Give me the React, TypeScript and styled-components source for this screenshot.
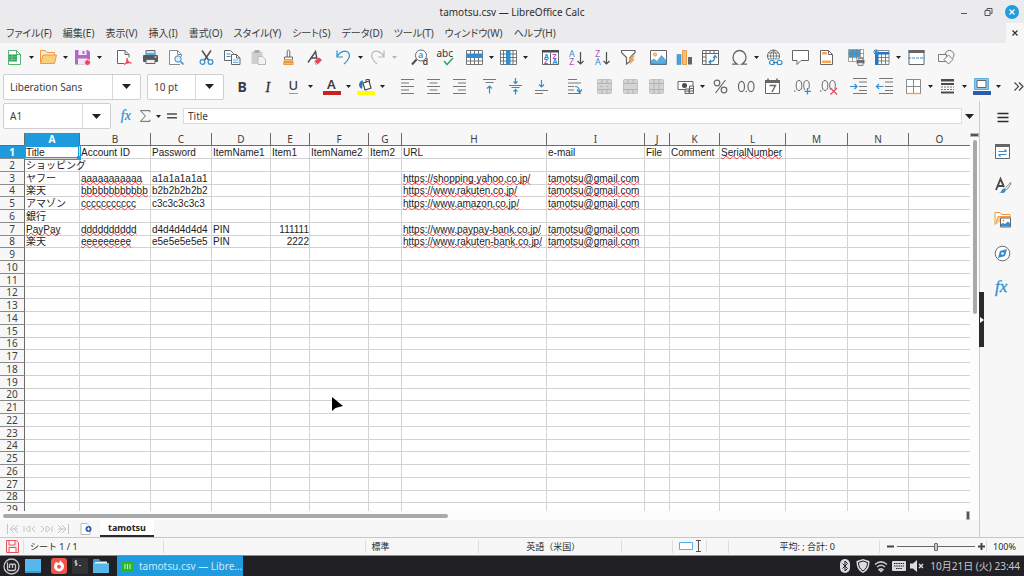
import React from 'react';
import styled, { createGlobalStyle } from 'styled-components';

const Global = createGlobalStyle`
  * { box-sizing: border-box; }
  body { margin: 0; background: #f7f7f7; }
  button, input { font: inherit; color: inherit; margin: 0; padding: 0; border: 0; background: none; }
  svg { display: block; flex: none; }
`;

const Screen = styled.div`
  height: 100vh;
  display: flex;
  flex-direction: column;
  overflow: hidden;
  background: #f7f7f7;
  color: #3d3d3d;
  font: 10px/14px 'Noto Sans', 'Noto Sans CJK JP', sans-serif;
`;
const TitleBar = styled.header`
  height: 23px;
  flex: none;
  display: grid;
  grid-template-columns: 1fr auto 1fr;
  align-items: center;
  background: #ebebed;
`;
const Title = styled.h1`
  grid-column: 2;
  margin: 0;
  font-size: 10px;
  font-weight: 400;
  color: #2e2e2e;
`;
const WindowButtons = styled.div`
  display: flex;
  justify-content: flex-end;
  gap: 10px;
  padding-right: 5px;
`;
const MenuBar = styled.nav`
  height: 20px;
  flex: none;
  display: flex;
  align-items: center;
  gap: 11px;
  padding-left: 6px;
  background: #ebebed;
`;
const MenuItem = styled.button`
  white-space: nowrap;
  font-feature-settings: 'palt';
`;
const CloseDoc = styled.button`
  margin-left: auto;
  width: 18px;
  height: 20px;
  display: grid;
  place-items: center;
  background: #f7f7f7;
`;
const Toolbar = styled.div`
  height: 29px;
  flex: none;
  display: flex;
  align-items: center;
  gap: 4px;
  padding-left: 2px;
`;
const Group = styled.div<{ $wide?: boolean }>`
  display: flex;
  flex: none;
  align-items: center;
  margin-left: ${(p) => (p.$wide ? 3 : 0)}px;
`;
const Tool = styled.button<{ $w?: number }>`
  width: ${(p) => p.$w ?? 26}px;
  height: 24px;
  flex: none;
  display: grid;
  place-items: center;
`;
const Combo = styled.div<{ $w: number }>`
  width: ${(p) => p.$w}px;
  height: 26px;
  flex: none;
  display: flex;
  border: 1px solid #cfcfd3;
  border-radius: 2px;
  background: #fff;
  input { flex: 1; min-width: 0; padding-left: 6px; outline: 0; }
  button { width: 28px; display: grid; place-items: center; border-left: 1px solid #d8d8dc; }
`;
const ComboRow = styled.div`
  display: flex;
  gap: 6px;
  padding: 0 1px;
`;
const More = styled.button`
  margin-left: auto;
`;
const Workspace = styled.div`
  flex: 1;
  min-height: 0;
  display: flex;
`;
const Main = styled.main`
  flex: 1;
  min-width: 0;
  display: flex;
  flex-direction: column;
`;
const FormulaBar = styled.div`
  height: 30px;
  flex: none;
  display: flex;
  align-items: center;
  padding: 0 3px;
  margin-bottom: 2px;
`;
const FormulaTools = styled.div`
  display: flex;
  align-items: center;
  padding-left: 7px;
`;
const FormulaInput = styled.input`
  flex: 1;
  min-width: 0;
  height: 16px;
  margin: 0 1px 0 2px;
  padding-left: 4px;
  border: 1px solid #dcdcdc;
  background: #fff;
  outline: 0;
`;
const SheetArea = styled.div`
  flex: 1;
  min-height: 0;
  display: flex;
`;
const GridView = styled.div`
  flex: 1;
  min-width: 0;
  overflow: hidden;
  background: #fff;
`;
const Grid = styled.table`
  width: 100%;
  table-layout: fixed;
  border-collapse: separate;
  border-spacing: 0;
  line-height: 11px;
  th { padding: 0; font-weight: 400; background: #f7f7f7; }
`;
const ColHead = styled.th<{ $on?: boolean }>`
  height: 13px;
  border-right: 1px solid #6b6b6b;
  border-bottom: 1px solid #6b6b6b;
  &&& {
    background: ${(p) => (p.$on ? '#1e9bdd' : '#f7f7f7')};
    color: ${(p) => (p.$on ? '#fff' : '#3d3d3d')};
    font-weight: ${(p) => (p.$on ? 700 : 400)};
  }
  &:last-child { border-right: 0; }
`;
const Corner = styled.td`
  height: 13px;
  padding: 0;
  background: #f7f7f7;
  border-right: 1px solid #6b6b6b;
  border-bottom: 1px solid #6b6b6b;
`;
const RowHead = styled(ColHead)`
  height: auto;
  border-bottom-color: #8a8a8a;
`;
const Row = styled.tr`
  height: 13px;
  &:nth-child(4n) { height: 12px; }
`;
const Cell = styled.td<{ $on?: boolean; $right?: boolean }>`
  position: relative;
  padding: 0 0 0 1px;
  border-right: 1px solid #d2d2d2;
  border-bottom: 1px solid #d2d2d2;
  color: #1c1c1c;
  font-family: 'Liberation Sans', 'Noto Sans CJK JP', sans-serif;
  white-space: nowrap;
  text-align: ${(p) => (p.$right ? 'right' : 'left')};
  ${(p) => p.$on && 'box-shadow: 0 0 0 1px #1e9bdd, inset 0 0 0 1px #1e9bdd; z-index: 1;'}
  &:last-child { border-right: 0; }
`;
const Text = styled.div`
  height: 11px;
`;
const Misspelt = styled.span`
  text-decoration: underline wavy #f5383d 1px;
  text-decoration-skip-ink: none;
  text-underline-offset: -1px;
`;
const FillHandle = styled.i`
  position: absolute;
  right: -2px;
  bottom: -2px;
  width: 4px;
  height: 4px;
  background: #1e9bdd;
`;
const VScroll = styled.div`
  width: 9px;
  flex: none;
  display: flex;
  flex-direction: column;
  align-items: center;
  gap: 3px;
  background: #fcfcfc;
`;
const SplitGrip = styled.div<{ $vertical?: boolean }>`
  width: ${(p) => (p.$vertical ? 4 : 9)}px;
  height: ${(p) => (p.$vertical ? 9 : 4)}px;
  background: #555;
  border: 1px solid #b5b5b5;
`;
const VThumb = styled.div`
  width: 4px;
  height: 46%;
  border-radius: 2px;
  background: #a9a9a9;
`;
const HScroll = styled.div`
  height: 9px;
  flex: none;
  display: flex;
  align-items: center;
  justify-content: space-between;
  padding: 0 9px 0 3px;
  background: #fcfcfc;
`;
const HThumb = styled.div`
  width: 46%;
  height: 4px;
  border-radius: 2px;
  background: #a9a9a9;
`;
const TabBar = styled.div`
  height: 17px;
  flex: none;
  display: flex;
  align-items: stretch;
  padding-left: 4px;
`;
const TabNav = styled.button`
  width: 17px;
  display: grid;
  place-items: center;
`;
const AddSheet = styled(TabNav)`
  width: 28px;
`;
const SheetTab = styled.button`
  width: 54px;
  background: #fff;
  border-bottom: 2px solid #2a2a2a;
  color: #222;
  font-size: 9px;
  font-weight: 700;
  line-height: 14px;
`;
const Sidebar = styled.aside`
  width: 45px;
  flex: none;
  position: relative;
  display: flex;
  flex-direction: column;
  align-items: center;
  gap: 10px;
  padding-top: 4px;
  border-left: 1px solid #cbcbcb;
`;
const SideHandle = styled.button`
  position: absolute;
  left: -1px;
  top: 191px;
  width: 5px;
  height: 55px;
  display: grid;
  place-items: center;
  background: #2a2a2e;
`;
const StatusBar = styled.footer`
  height: 19px;
  flex: none;
  display: grid;
  grid-template-columns: 24px 140fr 202fr 114fr 143fr 51fr 34px 22px 151fr 107px 37px;
  align-items: center;
  border-top: 1px solid #c6c6c6;
  border-bottom: 1px solid #8e8e8e;
  color: #2a2a2a;
  font-size: 9px;
`;
const Status = styled.div<{ $center?: boolean }>`
  height: 13px;
  display: flex;
  align-items: center;
  justify-content: ${(p) => (p.$center ? 'center' : 'flex-start')};
  gap: 2px;
  padding-left: 6px;
  line-height: 13px;
  white-space: nowrap;
  border-right: 1px solid #dedede;
  &:last-child { border-right: 0; }
`;
const Zoom = styled.input`
  appearance: none;
  flex: 1;
  min-width: 0;
  height: 9px;
  background: linear-gradient(#666, #666) center / 100% 1px no-repeat;
  &::-webkit-slider-thumb {
    appearance: none;
    width: 4px;
    height: 8px;
    border: 1px solid #666;
    border-radius: 1px;
    background: #ccc;
  }
`;
const Taskbar = styled.footer`
  height: 20px;
  flex: none;
  display: flex;
  align-items: center;
  padding: 0 4px 0 3px;
  background: #212025;
  color: #c9c9cc;
`;
const Launchers = styled.div`
  display: flex;
  align-items: center;
  gap: 5px;
  button:nth-child(3) { margin-left: 5px; }
`;
const TaskButton = styled.button`
  width: 126px;
  height: 20px;
  margin-left: 8px;
  padding: 0 0 0 5px;
  display: flex;
  align-items: center;
  gap: 6px;
  background: #1f9bde;
  color: #cfeafa;
  span { overflow: hidden; text-overflow: ellipsis; white-space: nowrap; }
`;
const Tray = styled.div`
  margin-left: auto;
  display: flex;
  align-items: center;
  gap: 4px;
  time { margin-left: 2px; white-space: nowrap; font-feature-settings: 'palt'; }
`;
const Pointer = styled.svg`
  position: absolute;
  left: 331px;
  top: 396px;
  z-index: 2;
`;

const G = '#666668';
const B = '#2f8fd0';
const O = '#ee9a4b';
const P = '#b04fc0';
const L = '#b9b9bb';

type Draw = React.ReactNode;
const lines = (d: string, c = G, w = 1): Draw => <path d={d} stroke={c} strokeWidth={w} fill="none" />;
const letter = (x: number, y: number, s: string, c: string, size = 8, w = 400): Draw => (
  <text x={x} y={y} fill={c} fontSize={size} fontWeight={w} fontFamily="'Noto Sans', sans-serif">{s}</text>
);
const mergeBase: Draw = <rect x="1.5" y="1.5" width="14" height="14" rx="1" fill="#d4d4d4" stroke="#c2c2c4" />;

const icons: Record<string, Draw> = {
  new: <><path d="M2.500 1.500h8l4 4v10h-12z" fill="#fff" stroke="#55b374" /><path d="M10.500 1.500v4h4" fill="none" stroke="#55b374" /><path d="M3 5.500h8v7H3z" fill="#2fa35a" /><path d="M3 8h8M3 10.500h8M6 5.500v7" stroke="#8fd0a6" strokeWidth=".7" /></>,
  open: <><path d="M.5 14.500v-13h5l1.500 2h7.500v3" fill="#fbe8cf" stroke={O} /><path d="M.5 14.500l2.500-8.500h13.500l-2 8.500z" fill="#f8cf7a" stroke={O} /></>,
  save: <><path d="M1 1h13l2 2v12.500H1z" fill="#b668c8" /><path d="M4.500 1v5h8V1z" fill="#f6ecf8" /><path d="M4 15.500v-6h9v6z" fill="#f3e6f6" /><path d="M9.500 2v3" stroke="#b668c8" strokeWidth="2" /><circle cx="13.500" cy="13.500" r="3" fill="#e8485a" stroke="#f7f7f7" /></>,
  pdf: <><path d="M8 14.500H1.500v-13h7.500l4 4v3" fill="#fff" stroke={G} /><path d="M9 1.500v4h4" fill="none" stroke={G} /><path d="M8 15.500c2-1 3-3.500 3-6.500.500 3 2 4.500 4.500 5-3-.5-5 .5-7.500 1.500z" fill="#e8485a" stroke="#e8485a" strokeWidth=".8" /></>,
  print: <><path d="M4 1.500h9v5H4z" fill="#cfe6f7" stroke={G} /><path d="M4 4h9v3H4z" fill="#5aaee0" /><rect x="1" y="6" width="15" height="7" rx="1" fill="#58585a" /><path d="M4 10.500h9v4H4z" fill="#eee" stroke={G} /><path d="M12.500 8h2" stroke="#fff" /></>,
  preview: <><path d="M12 15.500H1.500v-14h8l4 4v2" fill="#fff" stroke="#8a8a8c" /><path d="M9.500 1.500v4h4" fill="none" stroke="#8a8a8c" /><circle cx="10" cy="10" r="3.200" fill="#d8edf9" stroke={B} /><path d="M12.500 12.500l3 3" stroke={B} strokeWidth="1.600" /></>,
  cut: <>{lines('M4 1.500l6.500 9.500M13 1.500L6.500 11', '#4c4c4e', 1.4)}<circle cx="4.500" cy="13" r="2.400" fill="none" stroke={B} strokeWidth="1.200" /><circle cx="12.500" cy="13" r="2.400" fill="none" stroke={B} strokeWidth="1.200" /></>,
  copy: <><path d="M.500 1.500h6l3 3v7h-9z" fill="#fff" stroke={G} /><path d="M2.500 5h4M2.500 7.500h4" stroke={B} /><path d="M7.500 5.500h5l3.500 3.500v6.500H7.500z" fill="#fff" stroke={G} /><path d="M12.500 5.500V9H16" fill="none" stroke={G} /><path d="M9 11h5.500M9 13.300h5.500" stroke="#6eb4e2" strokeWidth="1.200" /></>,
  paste: <><rect x="1.500" y="2.500" width="11" height="12.500" fill="#cfcfd0" /><rect x="4.500" y="1" width="5" height="3" fill="#a9a9ab" /><path d="M8 7.500h4.500l3 3v5H8z" fill="#f2f2f2" stroke={L} /></>,
  brush: <><path d="M7.200 8V2.500a1.300 1.300 0 012.600 0V8" fill="#fff" stroke={G} /><path d="M4.500 10.500V8h8v2.500" fill="#fff" stroke={G} /><path d="M4.500 10.500h8l.7 5H3.500z" fill="#f7bd6a" stroke={O} /><path d="M4 13h9" stroke="#d9782a" /></>,
  clear: <>{lines('M2 13.500L9.500 2.500 11 10M5 9h6', '#4c4c4e', 1.4)}<path d="M8 12.500l5-4 3 2.500-4.500 4.500h-2z" fill="#e8485a" /><path d="M8 12.500l3.500 3" stroke="#f7f7f7" /></>,
  undo: lines('M2 1.500v6.500h6M2 8C5 1.500 12 .500 14 4.500c1.500 3.500-1 7-5 10.500', B, 1.2),
  redo: lines('M15 1.500v6.500H9M15 8C12 1.500 5 .500 3 4.500c-1.500 3.500 1 7 5 10.500', L, 1.2),
  find: <><circle cx="10" cy="6.500" r="5.500" fill="#fff" stroke={G} /><path d="M5.500 10.500L1 15.500" stroke="#4c4c4e" strokeWidth="2" />{letter(7, 9, 'a', B, 9, 600)}{letter(11.500, 16, 'd', '#4c4c4e', 9, 600)}</>,
  spell: <>{letter(-0.500, 7.500, 'abc', '#333', 10)}{lines('M7 12l3 3.500L16 9', '#35a863', 1.5)}</>,
  rows: <><path d="M.500 1.500h16v14H.500z" fill="#fff" />{lines('M.5 1.500h16v14H.5zM.5 12h16M4.500 1.500v14M8.500 1.500v14M12.500 1.500v14', G, 0.9)}<path d="M.500 4.500h16v4.500H.500z" fill="#2f8fd0" /></>,
  cols: <><path d="M.500 1.500h16v14H.500z" fill="#fff" />{lines('M.5 1.500h16v14H.5zM.5 5h16M.5 8.500h16M.5 12h16M3.500 1.500v14M13 1.500v14', G, 0.9)}<path d="M6 1.500h4.500v14H6z" fill="#2f8fd0" /></>,
  sort: <><path d="M.500 1.500h16v14H.500z" fill="#fff" stroke={G} /><path d="M0 1h17v2.500H0z" fill="#4c4c4e" />{lines('M8.500 2v14')}{letter(2, 9.500, 'A', B, 7, 700)}{letter(2, 15, 'Z', P, 7, 700)}{letter(10.500, 9.500, 'Z', P, 7, 700)}{letter(10.500, 15, 'A', B, 7, 700)}</>,
  az: <>{letter(1, 7.500, 'A', B, 9)}{letter(1, 16, 'Z', P, 9)}{lines('M12.500 3v12M9.500 12l3 3 3-3', '#4c4c4e', 1.2)}</>,
  za: <>{letter(1, 7.500, 'Z', P, 9)}{letter(1, 16, 'A', B, 9)}{lines('M12.500 3v12M9.500 12l3 3 3-3', '#4c4c4e', 1.2)}</>,
  filter: <><path d="M1.500 1.500h13.500v2l-5 5v4l-3.500 2.500V8.500l-5-5z" fill="#fff" stroke={G} strokeWidth="1.200" /><path d="M12 6.500L8.500 11.500h3L9.500 16l5.500-6h-2.500L15 6.500z" fill="#f5a04d" /></>,
  image: <><path d="M.500 1.500h16v14H.500z" fill="#fff" stroke={G} /><circle cx="5" cy="5.500" r="1.600" fill="#f8cf7a" stroke={O} /><path d="M1 15v-3l3-2 3 2.500 4.500-6 4.500 5V15z" fill="#5aaee0" stroke={B} strokeWidth=".6" /></>,
  chart: <><path d="M1 5.500h4v10H1z" fill="#4fa3dc" stroke={B} strokeWidth=".6" /><path d="M6.500 1.500h4v14h-4z" fill="#f7c073" stroke={O} /><path d="M12 8h4v7.500h-4z" fill={G} /></>,
  pivot: <><path d="M.500 1.500h16v14H.500z" fill="#fff" stroke={G} />{lines('M.5 4.500h16M4 1.500v14M8 1.500v3M12 1.500v3M.5 8H4M.5 12H4')}{lines('M7 13c4 0 6-2 6-6M11 9l2-2.500L15 9M9 11l-2 2 2 2', B, 1.2)}</>,
  omega: lines('M1 15.200H6.300c-3-2-4.300-4-4.300-6.700C2 4.500 5 1.500 8.500 1.500S15 4.500 15 8.500c0 2.700-1.300 4.700-4.300 6.700H16', G, 1.3),
  link: <><circle cx="7.500" cy="7" r="6" fill="#fff" stroke={G} />{lines('M1.500 7h12M2.500 4h10M2.500 10h10M7.500 1v12M7.500 1c-4 4-4 8 0 12M7.500 1c4 4 4 8 0 12', G, 0.8)}<path d="M3 10.500h14v6H3z" fill="#f7f7f7" /><rect x="3.500" y="11.500" width="5" height="4" rx="2" fill="none" stroke={B} strokeWidth="1.200" /><rect x="11" y="11.500" width="5" height="4" rx="2" fill="none" stroke={B} strokeWidth="1.200" />{lines('M7 13.500h5', B)}</>,
  comment: <path d="M.500 1.500h16v10H9l-4 4v-4H.500z" fill="#fff" stroke={G} />,
  header: <><path d="M2.500 1.500h8l4 4v10h-12z" fill="#fff" stroke={G} /><path d="M4 3h5v2.500H4zM4 11.500h9V14H4z" fill="#f5a75c" /><path d="M10.500 1.500v4h4" fill="none" stroke={G} /></>,
  area: <><path d="M.500.500h15v12H.500z" fill="#fff" /><path d="M1 1h11v7H1z" fill="#3f9bd8" />{lines('M.5.500h15v12H.5zM.5 4.500h15M.5 8.500h15M4.500.5v12M8.500.5v12M12.500.5v12', '#7d7d80', 0.7)}<path d="M8 10.500h9v5H8z" fill="#f7f7f7" /><rect x="8.500" y="11" width="8" height="3.500" fill={G} /><path d="M10 9.500h5v2h-5zM10 13.500h5v3h-5z" fill="#cfe6f7" stroke={G} strokeWidth=".7" /></>,
  freeze: <><path d="M2.500 1.500h13.500v14H2.500z" fill="#fff" />{lines('M2.500 1.500H16v14H2.500zM5 8.500h11M5 12h11M8.500 5v11M12.500 5v11', G, 0.8)}<path d="M2 3h14v2.500H5.500V16H2z" fill="#2278c4" />{lines('M3 0v6M0 3h6M1 1l4 4M5 1L1 5', '#2f8fd0', 1)}</>,
  split: <><path d="M1 1.500h15v14H1z" fill="#fff" stroke={G} /><path d="M.500 1h16v3H.500z" fill={G} /><path d="M0 9h17" stroke={B} strokeDasharray="3 1" /></>,
  shapes: <><circle cx="11.500" cy="6" r="4.500" fill="#f7f7f7" stroke="#7a7a7c" /><path d="M.500 5.500h8v7h-8z" fill="#f7f7f7" stroke="#7a7a7c" /><path d="M10.500 6l4.500 4.500-4.500 4.500L6 10.500z" fill="#f7f7f7" stroke="#7a7a7c" /></>,
  bold: letter(3.500, 13.500, 'B', '#3d3d3d', 14, 700),
  italic: <text x="5.500" y="13.500" fontSize="14" fontStyle="italic" fontFamily="'Liberation Serif', serif" fill="#2e2e2e" stroke="#2e2e2e" strokeWidth=".3">I</text>,
  underline: <>{letter(3.500, 12, 'U', '#3d3d3d', 13, 500)}{lines('M4 15.500h9', '#58aee2')}</>,
  fontcolor: <>{letter(4, 11, 'A', '#3d3d3d', 13, 600)}<path d="M0 13h18v4H0z" fill="#c9211e" /></>,
  fill: <><path d="M2 7c0-3 2-4.500 4-4.500L5 11c-1.500-1-3-2-3-4z" fill="#2278c4" /><path d="M6 5l6-2 2 7-6 2z" fill="#fff" stroke="#4c4c4e" strokeWidth="1.200" />{lines('M9 5V1.500h3.500V5', '#4c4c4e')}<path d="M0 13h18v4H0z" fill="#ffff00" /></>,
  left: lines('M2 1.500h13M2 5h8M2 8.500h13M2 12h8M2 15.500h13', '#77777a'),
  center: lines('M2 1.500h13M4.500 5h8M2 8.500h13M4.500 12h8M2 15.500h13', '#77777a'),
  right: lines('M2 1.500h13M7 5h8M2 8.500h13M7 12h8M2 15.500h13', '#77777a'),
  top: <>{lines('M2 1.500h13M4.500 4.500h8', '#77777a')}{lines('M8.500 15.500V8M6 10.500L8.500 8l2.500 2.500', B, 1.2)}</>,
  middle: <>{lines('M2 7.500h13M4.500 9.500h8', '#77777a')}{lines('M8.500 0v5.500M6.500 3.500l2 2 2-2M8.500 16.500v-5M6.500 13.500l2-2 2 2', B, 1.2)}</>,
  bottom: <>{lines('M2 12.500h13M2 15.500h8', '#77777a')}{lines('M8.500 2v7M6 6.500L8.500 9 11 6.500', B, 1.2)}</>,
  wrap: <>{lines('M2 1.500h9M2 5h13M2 8.500h6M2 12h6M2 15.500h13', '#77777a')}{lines('M9 8.500c3 0 4.500 1.500 4.500 5M11 11.500l2.500 3 2.500-3', B, 1.2)}</>,
  merge1: <>{mergeBase}{lines('M1.5 5.500h14M1.5 11.500h14M6 1.500v4M11 1.500v4M6 11.500v4M11 11.500v4M4 8.500h3M10 8.500h3', '#b2b2b4')}</>,
  merge2: <>{mergeBase}{lines('M1.5 5.500h14M1.5 11.500h14M6 1.500v4M11 1.500v4M6 11.500v4M11 11.500v4', '#b2b2b4')}</>,
  merge3: <>{mergeBase}{lines('M1.5 5.500h14M1.5 11.500h14M6 1.500v14M11 1.500v14', '#b2b2b4')}</>,
  currency: <><path d="M1 3.500h15v8H1z" fill="#fff" stroke={G} /><circle cx="7.500" cy="7.500" r="2.500" fill="#4c4c4e" /><path d="M8 11h4v4.500H8zM12.500 8h4v7.500h-4z" fill="#eee" stroke={G} />{lines('M8 13h4M12.500 10.500h4M12.500 13h4')}</>,
  percent: <><circle cx="5" cy="5" r="2.800" fill="none" stroke={G} strokeWidth="1.200" /><circle cx="12" cy="12" r="2.800" fill="none" stroke={G} strokeWidth="1.200" />{lines('M13.500 2L3.500 15', G, 1.2)}</>,
  number: <><ellipse cx="3.500" cy="8.500" rx="3" ry="5.200" fill="none" stroke={G} strokeWidth="1.200" /><ellipse cx="13" cy="8.500" rx="3" ry="5.200" fill="none" stroke={G} strokeWidth="1.200" /><circle cx="8.300" cy="13.500" r=".8" fill={G} /></>,
  date: <><path d="M1.500 2.500h14v13h-14z" fill="#fff" stroke={G} /><path d="M1 2h15v3H1z" fill={G} />{lines('M4 .5v3M13 .5v3', G, 1.5)}{lines('M5.500 7.500h6L8 14', G, 1.4)}</>,
  decadd: <><ellipse cx="5" cy="7.500" rx="2.800" ry="5" fill="none" stroke={G} /><ellipse cx="12.500" cy="7.500" rx="2.800" ry="5" fill="none" stroke={G} /><circle cx=".8" cy="13" r=".8" fill={G} /><circle cx="13.500" cy="13.500" r="3" fill="#f7f7f7" />{lines('M13.500 10v6.500M10.500 13.300H17', B, 1.3)}</>,
  decdel: <><ellipse cx="5" cy="7.500" rx="2.800" ry="5" fill="none" stroke={G} /><ellipse cx="12.500" cy="7.500" rx="2.800" ry="5" fill="none" stroke={G} /><circle cx=".8" cy="13" r=".8" fill={G} /><circle cx="13.500" cy="13.500" r="3" fill="#f7f7f7" />{lines('M10.500 10l6.500 6.500M17 10l-6.500 6.500', '#e8485a', 1.2)}</>,
  indent: <>{lines('M3 .5h14M9 4h8M9 8.500h8M9 12.500h8M3 15.500h14', '#77777a')}{lines('M0 8.500h7M4.500 6L7 8.500 4.500 11', B, 1.2)}</>,
  outdent: <>{lines('M3 .5h14M9 4h8M9 8.500h8M9 12.500h8M3 15.500h14', '#77777a')}{lines('M7.500 8.500h-7M3 6L.5 8.500 3 11', B, 1.2)}</>,
  borders: <><path d="M1.500 1.500h14v14h-14z" fill="#fff" stroke="#8a8a8c" />{lines('M8.500 1.500v14M1.500 8.500h14', '#8a8a8c')}{lines('M1 15.500h15', O, 1.3)}</>,
  linestyle: <><path d="M2 1h13v2.500H2zM2 5h13v2H2z" fill="#4c4c4e" /><path d="M2 9h13M2 11.500h13" stroke="#77777a" strokeDasharray="2 1" />{lines('M2 14.500h13', '#4c4c4e', 2)}</>,
  bordercolor: <><path d="M1.500.500h14v11h-14z" fill="#8ec7ea" stroke="#5aaee0" /><path d="M4 2.500h9v7H4z" fill="#fff" stroke={G} /><path d="M0 13h18v4H0z" fill="#2a5caa" /></>,
  fx: <text x="1" y="13" fontSize="17" fontStyle="italic" fontFamily="'Liberation Serif', serif" fill="#2f8fd0" stroke="#2f8fd0" strokeWidth=".3">fx</text>,
  sigma: lines('M14.500 4V2H3l6 6.500L3 15h11.500v-2', G, 1.2),
  equals: lines('M2.500 6h12M2.500 10.500h12', '#4c4c4e', 1.8),
  menu: lines('M3.500 4.500h11M3.500 8.500h11M3.500 12.500h11', '#2a2a2a', 1.6),
  properties: <><path d="M1.500 1.500h14v14h-14z" fill="#fff" stroke={G} /><path d="M1 1h15v3H1z" fill={G} />{lines('M4.500 8.500h8M10.500 6.500l2 2M12.500 11.500h-8M6.500 13.500l-2-2', B, 1.2)}</>,
  styles: <>{lines('M2 13L6.500 2 10 10M4 9h5.500', '#4c4c4e', 1.9)}<path d="M16.500 5.500L11 11.500l1.500 1.500 4.500-6z" fill="#fff" stroke={G} strokeWidth=".8" /><path d="M5 15.500c3 0 2.500-4 5-4 3 0 2 4-1 4.500z" fill="#2f8fd0" /></>,
  gallery: <><path d="M1 13.500v-12h5l1.500 2H16V9" fill="#fff" stroke={O} /><path d="M1.500 13.500L4 5.500h13" fill="#f8cf7a" stroke={O} /><path d="M6.500 7h10v9h-10z" fill="#fff" stroke={G} /><circle cx="9.500" cy="9.500" r="1" fill={O} /><path d="M7 15.500V13l2-1 2 1 3-2.500 2 2v3z" fill="#2f8fd0" /></>,
  navigator: <><circle cx="8.500" cy="8.500" r="7.300" fill="#fff" stroke={G} /><path d="M13 4l-2 7-7 2 2-7z" fill="#2f8fd0" /><circle cx="8.500" cy="8.500" r="1.300" fill="#fff" /></>,
};

const Icon = ({ n, s = 17 }: { n: string; s?: number }) => (
  <svg width={s} height={s} viewBox="0 0 17 17" overflow="visible" aria-hidden="true">{icons[n]}</svg>
);
const Caret = ({ big, muted }: { big?: boolean; muted?: boolean }) => (
  <svg width={big ? 9 : 5} height={big ? 5 : 3} viewBox="0 0 10 6" preserveAspectRatio="none" aria-hidden="true">
    <path d="M0 0h10L5 6z" fill={muted ? '#b5b5b5' : '#222'} />
  </svg>
);

// A trailing "+" marks a split button with its own drop-down arrow; a leading ">" a wider gap before the group.
const standardBar = [
  'new+ open+ save+', '> pdf print preview', 'cut copy paste', 'brush clear', 'undo+ redo+', '> find spell',
  'rows+ cols+', '> sort az za filter', 'image chart pivot', 'omega+ link comment header', 'area freeze+ split', 'shapes',
];
const formatBar = [
  'bold italic underline+', 'fontcolor+ fill+', '> left center right', 'top middle bottom', '> wrap',
  'merge1 merge2 merge3', 'currency+ percent number date', 'decadd decdel', 'indent outdent', 'borders+ linestyle+ bordercolor+',
];

const Groups = ({ defs }: { defs: string[] }) => (
  <>
    {defs.map((def) => {
      const wide = def.startsWith('>');
      const names = def.replace('> ', '').split(' ');
      return (
        <Group key={def} $wide={wide}>
          {names.map((raw) => {
            const n = raw.replace('+', '');
            const split = raw.endsWith('+');
            return (
              <React.Fragment key={n}>
                <Tool $w={split ? 25 : 26} aria-label={n}><Icon n={n} /></Tool>
                {split && <Tool $w={9} aria-label={`${n} options`}><Caret muted={n === 'redo'} /></Tool>}
              </React.Fragment>
            );
          })}
        </Group>
      );
    })}
  </>
);

const menus = ['ファイル(F)', '編集(E)', '表示(V)', '挿入(I)', '書式(O)', 'スタイル(Y)', 'シート(S)', 'データ(D)', 'ツール(T)', 'ウィンドウ(W)', 'ヘルプ(H)'];
const widths = [25, 55, 71, 61, 59, 39, 59, 33, 145, 98, 25, 50, 66, 62, 61];
const columns = 'ABCDEFGHIJKLMNO'.split('');
// Cells that start with "~" are flagged by the spelling checker.
const data: Record<number, Record<string, string>> = {
  1: { A: 'Title', B: 'Account ID', C: 'Password', D: 'ItemName1', E: 'Item1', F: 'ItemName2', G: 'Item2', H: 'URL', I: 'e-mail', J: 'File', K: 'Comment', L: '~SerialNumber' },
  2: { A: 'ショッピング' },
  3: { A: 'ヤフー', B: '~aaaaaaaaaaa', C: 'a1a1a1a1a1', H: '~https://shopping.yahoo.co.jp/', I: '~tamotsu@gmail.com' },
  4: { A: '楽天', B: '~bbbbbbbbbbbb', C: 'b2b2b2b2b2', H: '~https://www.rakuten.co.jp/', I: '~tamotsu@gmail.com' },
  5: { A: 'アマゾン', B: '~ccccccccccc', C: 'c3c3c3c3c3', H: '~https://www.amazon.co.jp/', I: '~tamotsu@gmail.com' },
  6: { A: '銀行' },
  7: { A: '~PayPay', B: '~dddddddddd', C: 'd4d4d4d4d4', D: 'PIN', E: '111111', H: '~https://www.paypay-bank.co.jp/', I: '~tamotsu@gmail.com' },
  8: { A: '楽天', B: '~eeeeeeeee', C: 'e5e5e5e5e5', D: 'PIN', E: '2222', H: '~https://www.rakuten-bank.co.jp/', I: '~tamotsu@gmail.com' },
};

const Sheet = () => (
  <Grid>
    <colgroup>{widths.map((w, i) => <col key={i} width={w} />)}<col /></colgroup>
    <thead>
      <tr><Corner />{columns.map((c) => <ColHead key={c} scope="col" $on={c === 'A'}>{c}</ColHead>)}</tr>
    </thead>
    <tbody>
      {Array.from({ length: 29 }, (_, i) => i + 1).map((r) => (
        <Row key={r}>
          <RowHead scope="row" $on={r === 1}><Text>{r}</Text></RowHead>
          {columns.map((c) => {
            const v = data[r]?.[c] ?? '';
            const on = r === 1 && c === 'A';
            return (
              <Cell key={c} $on={on} $right={/^\d+$/.test(v)}>
                <Text>{v.startsWith('~') ? <Misspelt>{v.slice(1)}</Misspelt> : v}</Text>
                {on && <FillHandle />}
              </Cell>
            );
          })}
        </Row>
      ))}
    </tbody>
  </Grid>
);

const navPaths = ['M1.500 1v10M4 6h8M8 2L4 6l4 4M12 2L8 6l4 4', 'M1 3v6M6 3L3 6l3 3M7 3v6M12 3L9 6l3 3', 'M1 3l3 3-3 3M6 3v6M7 3l3 3-3 3M12 3v6', 'M11.500 1v10M1 6h8M5 2l4 4-4 4M1 2l4 4-4 4'];

export default function App() {
  return (
    <Screen>
      <Global />
      <TitleBar>
        <Title>tamotsu.csv — LibreOffice Calc</Title>
        <WindowButtons>
          <button aria-label="Minimize"><svg width="14" height="14"><path d="M4 8.500h6" stroke="#555" /></svg></button>
          <button aria-label="Restore"><svg width="14" height="14"><path d="M4 5.500h5v5H4zM6 5V3.500h5v5H9.500" fill="none" stroke="#555" /></svg></button>
          <button aria-label="Close"><svg width="14" height="14"><circle cx="7" cy="7" r="7" fill="#1f9bde" /><path d="M4.500 4.500l5 5M9.500 4.500l-5 5" stroke="#fff" strokeWidth="1.200" /></svg></button>
        </WindowButtons>
      </TitleBar>
      <MenuBar>
        {menus.map((m) => <MenuItem key={m}>{m}</MenuItem>)}
        <CloseDoc aria-label="Close document"><svg width="8" height="8"><path d="M1.500 1.500l5 5M6.500 1.500l-5 5" stroke="#333" strokeWidth="1.200" /></svg></CloseDoc>
      </MenuBar>
      <Toolbar><Groups defs={standardBar} /></Toolbar>
      <Toolbar>
        <ComboRow>
          <Combo $w={138}><input aria-label="Font name" defaultValue="Liberation Sans" /><button aria-label="Font list"><Caret big /></button></Combo>
          <Combo $w={77}><input aria-label="Font size" defaultValue="10 pt" /><button aria-label="Size list"><Caret big /></button></Combo>
        </ComboRow>
        <Groups defs={formatBar} />
        <More aria-label="More"><svg width="11" height="9"><path d="M1.500.500l4 4-4 4M6 .500l4 4-4 4" fill="none" stroke="#444" strokeWidth="1.200" /></svg></More>
      </Toolbar>
      <Workspace>
        <Main>
          <FormulaBar>
            <Combo $w={108}><input aria-label="Name box" defaultValue="A1" /><button aria-label="Name list"><Caret big /></button></Combo>
            <FormulaTools>
              <Tool $w={18} aria-label="Function wizard"><Icon n="fx" s={14} /></Tool>
              <Tool $w={18} aria-label="Sum"><Icon n="sigma" s={14} /></Tool>
              <Tool $w={9} aria-label="Sum options"><Caret /></Tool>
              <Tool $w={18} aria-label="Formula"><Icon n="equals" s={14} /></Tool>
            </FormulaTools>
            <FormulaInput aria-label="Formula input" defaultValue="Title" />
            <Tool $w={13} aria-label="Expand formula bar"><Caret big /></Tool>
          </FormulaBar>
          <SheetArea>
            <GridView><Sheet /></GridView>
            <VScroll><SplitGrip /><VThumb /></VScroll>
          </SheetArea>
          <HScroll><HThumb /><SplitGrip $vertical /></HScroll>
          <TabBar>
            {navPaths.map((d, i) => (
              <TabNav key={i} aria-label={`Sheet navigation ${i + 1}`}><svg width="13" height="12"><path d={d} fill="none" stroke="#c4c4c4" /></svg></TabNav>
            ))}
            <AddSheet aria-label="Add sheet"><svg width="12" height="12"><path d="M1 .500h6l3 3v8H1z" fill="#fff" stroke="#bbb" /><circle cx="8.500" cy="6" r="3" fill="#2a5caa" /><path d="M8.500 4.500v3M7 6h3" stroke="#fff" /></svg></AddSheet>
            <SheetTab>tamotsu</SheetTab>
          </TabBar>
        </Main>
        <Sidebar>
          {['menu', 'properties', 'styles', 'gallery', 'navigator', 'fx'].map((n) => <Tool key={n} aria-label={n}><Icon n={n} /></Tool>)}
          <SideHandle aria-label="Collapse sidebar"><svg width="4" height="6"><path d="M0 0l4 3-4 3z" fill="#fff" /></svg></SideHandle>
        </Sidebar>
      </Workspace>
      <StatusBar>
        <Status><svg width="13" height="13"><path d="M.500.500h10l2 2v10H.500z" fill="#fbe3e4" stroke="#e0565c" /><path d="M3 1v4h6V1M3 12V7.500h7V12" fill="#fff" stroke="#e0565c" /></svg></Status>
        <Status>シート 1 / 1</Status>
        <Status />
        <Status>標準</Status>
        <Status $center>英語（米国）</Status>
        <Status />
        <Status><svg width="23" height="13"><path d="M.500 2.500h13v7H.500z" fill="#fff" stroke="#58aee2" /><path d="M17 .500h5M17 11.500h5M19.500.500v11" stroke="#555" fill="none" /></svg></Status>
        <Status />
        <Status $center>平均: ; 合計: 0</Status>
        <Status>
          <button aria-label="Zoom out"><svg width="9" height="9"><path d="M1 4.500h7" stroke="#444" strokeWidth="2" /></svg></button>
          <Zoom type="range" aria-label="Zoom" />
          <button aria-label="Zoom in"><svg width="9" height="9"><path d="M1 4.500h7M4.500 1v7" stroke="#444" strokeWidth="2" /></svg></button>
        </Status>
        <Status>100%</Status>
      </StatusBar>
      <Taskbar>
        <Launchers>
          <button aria-label="Menu"><svg width="17" height="17"><circle cx="8.500" cy="8.500" r="7.500" fill="none" stroke="#c9c9cc" strokeWidth="1.300" /><path d="M4.500 4.500v6a2 2 0 002 2h4a2 2 0 002-2V7.500a1.500 1.500 0 00-3 0v2.500M9.500 7.500a1.500 1.500 0 00-3 0v2.500" fill="none" stroke="#c9c9cc" strokeWidth="1.300" /></svg></button>
          <button aria-label="Show desktop"><svg width="16" height="14"><path d="M0 0h16v14H0z" fill="#57b7ea" /><path d="M0 12h16v2H0z" fill="#3f9bd0" /></svg></button>
          <button aria-label="Firefox"><svg width="16" height="16"><rect width="16" height="16" rx="3" fill="#f2544a" /><path d="M3 8.500a5 5 0 0010 0c0-3-2-4-4-6.500 0 2-.5 2.500-1.500 3L5 4C3.500 5.500 3 7 3 8.500z" fill="#fff" /><circle cx="8" cy="8.800" r="2" fill="#f2544a" /></svg></button>
          <button aria-label="Terminal"><svg width="16" height="16"><rect width="16" height="16" rx="2" fill="#343438" /><path d="M5 3H3v2h2v2H3M4 2v6M7 7.500h2" stroke="#ddd" fill="none" strokeWidth=".8" /></svg></button>
          <button aria-label="Files"><svg width="16" height="14"><path d="M0 1.500C0 .500.500 0 1.500 0H6l1.500 2H14v3H0z" fill="#3f9bd0" /><path d="M0 4h16v10H0z" fill="#57b7ea" /><path d="M2 3h12v1.500H2z" fill="#e8f5fc" /></svg></button>
        </Launchers>
        <TaskButton>
          <svg width="11" height="11"><rect width="11" height="11" rx="2" fill="#2fb52f" /><path d="M3 3v5M5.500 3v5M8 3v5" stroke="#d5f5c5" /></svg>
          <span>tamotsu.csv — LibreOffice Calc</span>
        </TaskButton>
        <Tray>
          <svg width="14" height="14"><rect x="2" width="10" height="14" rx="5" fill="#dcdcde" /><path d="M4.500 4.500l5 5L7 12V2l2.500 2.500-5 5" stroke="#212025" fill="none" /></svg>
          <svg width="14" height="14"><path d="M7 0l6.500 2c0 6-1.500 9.500-6.500 12C2 11.500.500 8 .500 2z" fill="#dcdcde" /><path d="M7 2l4.500 1.500c0 4-1.500 6.500-4.500 8.500-3-2-4.500-4.500-4.500-8.500z" fill="none" stroke="#212025" /></svg>
          <svg width="14" height="14"><path d="M1 5.500c4-3.500 8-3.500 12 0M3 8c3-2.500 5-2.500 8 0M5 10.500c1.500-1 2.500-1 4 0L7 12.500z" fill="none" stroke="#c9c9cc" strokeWidth="1.500" /></svg>
          <svg width="14" height="14"><rect y="2" width="14" height="10" rx="1" fill="#dcdcde" /><path d="M2 4.500h10M2 7h10M4 9.500h6" stroke="#212025" strokeDasharray="1.500 .700" /></svg>
          <svg width="14" height="14"><path d="M0 4.500h3L7 1v12L3 9.500H0z" fill="#dcdcde" /><path d="M9 5l4 4M13 5L9 9" stroke="#dcdcde" strokeWidth="1.500" /></svg>
          <time>10月21日 (火) 23:44</time>
        </Tray>
      </Taskbar>
      <Pointer width="13" height="16"><path d="M1 1v14l3.500-3 7.500-2z" fill="#000" /></Pointer>
    </Screen>
  );
}
